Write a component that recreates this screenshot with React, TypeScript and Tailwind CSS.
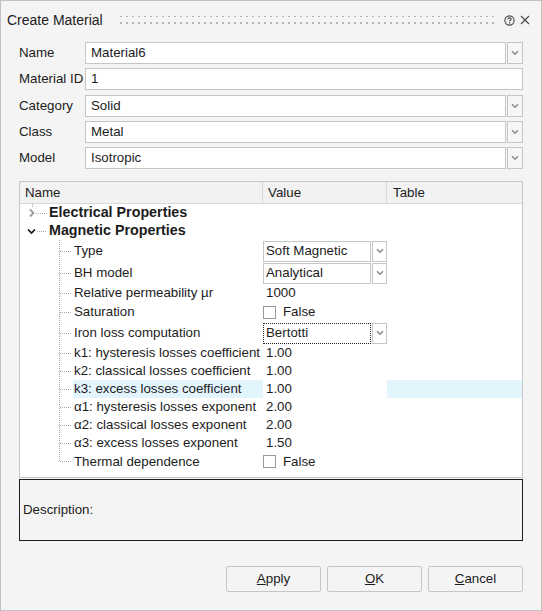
import React from "react";

const Chevron = () => (
  <svg width="8" height="6" viewBox="0 0 8 6">
    <path d="M1 1.2 L4 4.2 L7 1.2" fill="none" stroke="#8c8c8c" strokeWidth="1.6" />
  </svg>
);

const FormRow = ({ label, value, combo = true }: { label: string; value: string; combo?: boolean }) => (
  <div className="flex items-center h-[22px]">
    <div className="w-[66px] shrink-0">{label}</div>
    <div className="flex-1 h-full bg-white border border-[#c6c6c6] flex items-center pl-[5px]">{value}</div>
    {combo && (
      <div className="w-[16px] h-full ml-[1px] border border-[#c6c6c6] bg-[#f6f6f6] flex items-center justify-center">
        <Chevron />
      </div>
    )}
  </div>
);

const TreeLines = ({ h, last = false }: { h: number; last?: boolean }) => (
  <svg width="53" height={h} className="shrink-0">
    <line x1="39.5" y1="0" x2="39.5" y2={last ? h / 2 : h} stroke="#a8a8a8" strokeDasharray="1 1" />
    <line x1="40" y1={Math.floor(h / 2) + 0.5} x2="52" y2={Math.floor(h / 2) + 0.5} stroke="#a8a8a8" strokeDasharray="1 1" />
  </svg>
);

const Combo = ({ value, focused = false }: { value: string; focused?: boolean }) => (
  <div className="flex h-[21px] w-[125px]">
    <div
      className={
        focused
          ? "flex-1 bg-white border border-dotted border-[#222] flex items-center pl-[2px]"
          : "flex-1 bg-white border border-[#c6c6c6] flex items-center pl-[2px]"
      }
    >
      {value}
    </div>
    <div className="w-[15px] ml-[1px] border border-[#c6c6c6] bg-white flex items-center justify-center">
      <Chevron />
    </div>
  </div>
);

const Check = () => (
  <div className="flex items-center">
    <div className="w-[13px] h-[13px] border border-[#9a9a9a] bg-white" />
    <span className="ml-[7px]">False</span>
  </div>
);

type Row = { label: string; h: number; value?: React.ReactNode; hl?: boolean; last?: boolean };

const rows: Row[] = [
  { label: "Type", h: 22, value: <Combo value="Soft Magnetic" /> },
  { label: "BH model", h: 22, value: <Combo value="Analytical" /> },
  { label: "Relative permeability µr", h: 18, value: <span className="pl-[3px]">1000</span> },
  { label: "Saturation", h: 20, value: <Check /> },
  { label: "Iron loss computation", h: 22, value: <Combo value="Bertotti" focused /> },
  { label: "k1: hysteresis losses coefficient", h: 18, value: <span className="pl-[3px]">1.00</span> },
  { label: "k2: classical losses coefficient", h: 18, value: <span className="pl-[3px]">1.00</span> },
  { label: "k3: excess losses coefficient", h: 18, value: <span className="pl-[3px]">1.00</span>, hl: true },
  { label: "α1: hysteresis losses exponent", h: 18, value: <span className="pl-[3px]">2.00</span> },
  { label: "α2: classical losses exponent", h: 18, value: <span className="pl-[3px]">2.00</span> },
  { label: "α3: excess losses exponent", h: 18, value: <span className="pl-[3px]">1.50</span> },
  { label: "Thermal dependence", h: 19, value: <Check />, last: true },
];

export default function App() {
  return (
    <div className="w-[542px] h-[611px] bg-[#f4f4f4] border border-[#c2c2c2] flex flex-col text-[13.3px] text-[#1c1c1c] font-['Liberation_Sans',Arial,sans-serif] overflow-hidden">
      {/* Title bar */}
      <div className="h-[38px] flex items-center pl-[6px] pr-[11px] shrink-0">
        <span className="text-[14px] text-[#222]">Create Material</span>
        <svg className="flex-1 ml-[17px] mr-[10px]" height="10">
          <defs>
            <pattern id="grip" width="6" height="7" patternUnits="userSpaceOnUse">
              <rect x="0" y="0" width="2" height="2" fill="#b4b4b4" />
            </pattern>
          </defs>
          <rect x="0" y="1" width="100%" height="9" fill="url(#grip)" />
        </svg>
        <svg width="11" height="11" viewBox="0 0 11 11" className="mr-[5px]">
          <circle cx="5.5" cy="5.5" r="4.6" fill="none" stroke="#444" strokeWidth="1.1" />
          <path d="M3.9 4.3 C3.9 3.3 4.6 2.9 5.5 2.9 C6.4 2.9 7.1 3.4 7.1 4.2 C7.1 5.2 5.6 5.3 5.6 6.4" fill="none" stroke="#444" strokeWidth="1.1" />
          <rect x="5" y="7.3" width="1.2" height="1.2" fill="#444" />
        </svg>
        <svg width="10" height="10" viewBox="0 0 10 10">
          <path d="M1 1 L9 9 M9 1 L1 9" stroke="#444" strokeWidth="1.1" />
        </svg>
      </div>

      {/* Form */}
      <div className="px-[18px] mt-[3px] flex flex-col gap-[4.3px] shrink-0">
        <FormRow label="Name" value="Material6" />
        <FormRow label="Material ID" value="1" combo={false} />
        <FormRow label="Category" value="Solid" />
        <FormRow label="Class" value="Metal" />
        <FormRow label="Model" value="Isotropic" />
      </div>

      {/* Tree */}
      <div className="mx-[18px] mt-[12px] h-[297px] bg-white border border-[#c6c6c6] flex flex-col shrink-0">
        <div className="h-[22px] bg-[#f2f2f2] border-b border-[#d9d9d9] flex shrink-0">
          <div className="w-[243px] pl-[5px] flex items-center border-r border-[#d9d9d9]">Name</div>
          <div className="w-[124px] pl-[5px] flex items-center border-r border-[#d9d9d9]">Value</div>
          <div className="flex-1 pl-[6px] flex items-center">Table</div>
        </div>
        {/* Electrical */}
        <div className="h-[18px] flex items-center">
          <svg width="29" height="18" className="shrink-0">
            <line x1="12.5" y1="0" x2="12.5" y2="4" stroke="#a8a8a8" strokeDasharray="1 1" />
            <path d="M10 5.5 L13.5 9 L10 12.5" fill="none" stroke="#9a9a9a" strokeWidth="1.8" />
            <line x1="16" y1="9.5" x2="27" y2="9.5" stroke="#a8a8a8" strokeDasharray="1 1" />
          </svg>
          <span className="font-bold text-[14.3px]">Electrical Properties</span>
        </div>
        {/* Magnetic */}
        <div className="h-[18px] flex items-center">
          <svg width="29" height="18" className="shrink-0">
            <path d="M8 7.5 L11.5 11 L15 7.5" fill="none" stroke="#111" strokeWidth="1.7" />
            <line x1="17" y1="9.5" x2="27" y2="9.5" stroke="#a8a8a8" strokeDasharray="1 1" />
          </svg>
          <span className="font-bold text-[14.3px]">Magnetic Properties</span>
        </div>
        {rows.map((r) => (
          <div key={r.label} className="flex" style={{ height: r.h }}>
            <div className="w-[243px] flex shrink-0">
              <TreeLines h={r.h} last={r.last} />
              <div className={r.hl ? "flex-1 flex items-center pl-[1px] bg-[#e3f5fc]" : "flex-1 flex items-center pl-[1px]"}>
                {r.label}
              </div>
            </div>
            <div className="w-[124px] flex items-center shrink-0">{r.value}</div>
            <div className={r.hl ? "flex-1 bg-[#e3f5fc]" : "flex-1"} />
          </div>
        ))}
      </div>

      {/* Description */}
      <div className="mx-[18px] mt-[1px] h-[62px] border border-[#1e1e1e] flex items-center pl-[3px] text-[13.3px] shrink-0">
        Description:
      </div>

      {/* Buttons */}
      <div className="flex justify-end gap-[6px] px-[18px] mt-[25px]">
        {[
          ["A", "pply"],
          ["O", "K"],
          ["C", "ancel"],
        ].map(([u, rest]) => (
          <div
            key={u + rest}
            className="w-[95px] h-[26px] border border-[#c6c6c6] rounded-[2px] bg-[#f4f4f4] flex items-center justify-center"
          >
            <span>
              <span className="underline">{u}</span>
              {rest}
            </span>
          </div>
        ))}
      </div>
    </div>
  );
}
